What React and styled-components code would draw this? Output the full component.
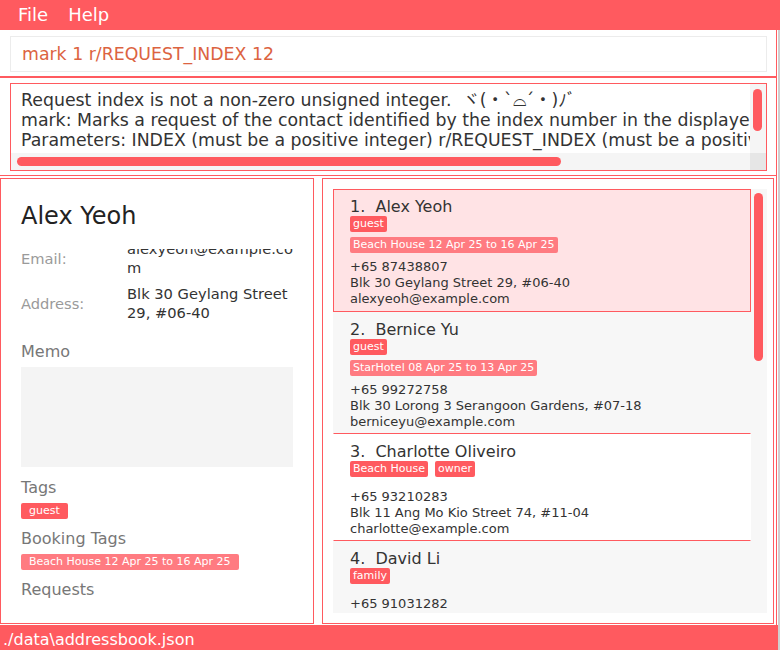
import React from "react";
import styled, { createGlobalStyle } from "styled-components";

const RED = "#ff5a5f";
const FONT = `"DejaVu Sans", "Noto Sans CJK JP", sans-serif`;

const Global = createGlobalStyle`
  html, body { margin: 0; padding: 0; }
  body { font-family: ${FONT}; background: #cfcfcf; }
  * { box-sizing: border-box; }
`;

const Window = styled.div`
  width: 780px;
  height: 650px;
  display: flex;
  flex-direction: column;
  overflow: hidden;
  background: #cfcfcf;
`;

const MenuBar = styled.div`
  height: 30px;
  flex: none;
  background: ${RED};
  display: flex;
  align-items: center;
  padding-left: 8px;
`;

const MenuItem = styled.span`
  color: #fff;
  font-size: 18px;
  padding: 0 10px;
  line-height: 30px;
`;

const Main = styled.div`
  width: 778px;
  height: 620px;
  background: #fff;
  padding-right: 1px;
  display: flex;
  flex-direction: column;
`;

const CommandPane = styled.div`
  height: 48px;
  flex: none;
  border-right: 1px solid ${RED};
  border-bottom: 2px solid ${RED};
  padding: 6px 9px 0 10px;
`;

const CommandBox = styled.div`
  height: 36px;
  border: 1px solid #ececec;
  display: flex;
  align-items: center;
  padding-left: 11px;
  font-size: 17.33px;
  color: #dc6341;
`;

const ResultPane = styled.div`
  height: 98px;
  flex: none;
  border-right: 1px solid ${RED};
  border-bottom: 1px solid ${RED};
  padding: 5px 9px 0 10px;
`;

const ResultBox = styled.div`
  height: 88px;
  border: 1px solid ${RED};
  display: grid;
  grid-template-columns: 1fr 16px;
  grid-template-rows: 1fr 17px;
`;

const ResultText = styled.div`
  overflow: hidden;
  white-space: pre;
  font-size: 17.33px;
  line-height: 20px;
  color: #333;
  padding: 6px 0 0 10px;
`;

const VTrack = styled.div`
  background: #f5f5f5;
  padding: 5px 3px 0 3px;
`;

const VThumb = styled.div`
  height: ${(p) => p.$h}px;
  width: 9px;
  border-radius: 5px;
  background: ${RED};
`;

const HTrack = styled.div`
  background: #f5f5f5;
  padding: 4px 0 0 6px;
`;

const HThumb = styled.div`
  width: ${(p) => p.$w}px;
  height: 9px;
  border-radius: 5px;
  background: ${RED};
`;

const Corner = styled.div`
  background: #e6e6e6;
`;

const Panels = styled.div`
  height: 449px;
  flex: none;
  border-right: 1px solid ${RED};
  padding: 2px 2px 1px 0;
  display: flex;
  gap: 8px;
`;

const DetailPanel = styled.div`
  width: 314px;
  flex: none;
  border: 1px solid ${RED};
  padding: 23px 20px 0 20px;
  overflow: hidden;
  display: flex;
  flex-direction: column;
`;

const DetailName = styled.div`
  font-size: 24px;
  line-height: 28px;
  color: #222;
`;

const InfoGrid = styled.div`
  display: grid;
  grid-template-columns: 106px 166px;
  grid-template-rows: 24px 38px;
  row-gap: 14px;
  margin-top: 16px;
  font-size: 14.67px;
`;

const InfoLabel = styled.div`
  color: #9a9a9a;
  display: flex;
  align-items: center;
`;

const InfoValue = styled.div`
  color: #333;
  line-height: 19px;
  display: flex;
  align-items: center;
  word-break: break-all;
  clip-path: inset(${(p) => p.$clip || 0}px -20px -40px -20px);
`;

const SectionLabel = styled.div`
  font-size: 16px;
  line-height: 20px;
  color: #777;
  margin-top: ${(p) => p.$mt}px;
`;

const MemoBox = styled.div`
  height: 100px;
  width: 272px;
  flex: none;
  background: #f4f4f4;
  margin-top: 5px;
`;

const DetailTags = styled.div`
  display: flex;
  gap: 6px;
  margin-top: 5px;
`;

const BigTag = styled.span`
  font-size: 11px;
  line-height: 16px;
  height: 16px;
  padding: 0 8px;
  color: #fff;
  border-radius: 2px;
  background: ${(p) => (p.$booking ? "#ff7b81" : RED)};
`;

const ListPanel = styled.div`
  width: 452px;
  flex: none;
  border: 1px solid ${RED};
  padding: 10px 6px 10px 10px;
  display: flex;
`;

const ListView = styled.div`
  flex: 1;
  background: #f7f7f7;
  display: flex;
  overflow: hidden;
`;

const Cards = styled.div`
  width: 418px;
  flex: none;
  display: flex;
  flex-direction: column;
`;

const Card = styled.div`
  flex: none;
  border: 1px solid transparent;
  border-bottom-color: ${RED};
  background: ${(p) => (p.$selected ? "#ffe3e5" : p.$odd ? "#ffffff" : "#f7f7f7")};
  ${(p) => (p.$selected ? `border-color: ${RED};` : "")}
  padding: 7px 16px ${(p) => (p.$selected ? 4 : 3)}px 16px;
  color: #333;
  display: flex;
  flex-direction: column;
`;

const CardName = styled.div`
  font-size: 16px;
  line-height: 19px;
  white-space: pre;
`;

const TagRow = styled.div`
  display: flex;
  gap: 7px;
  min-height: ${(p) => p.$h}px;
  margin-top: ${(p) => p.$mt || 0}px;
`;

const Tag = styled.span`
  font-size: 11px;
  line-height: 16px;
  height: 16px;
  padding: 0 3px;
  color: #fff;
  border-radius: 2px;
  background: ${(p) => (p.$booking ? "#ff7b81" : RED)};
`;

const CardLine = styled.div`
  font-size: 13px;
  line-height: 16px;
  white-space: nowrap;
`;

const CardLines = styled.div`
  margin-top: 6px;
  display: flex;
  flex-direction: column;
`;

const ListScroll = styled.div`
  width: 15px;
  flex: none;
  padding: 4px 3px 0 3px;
`;

const StatusBar = styled.div`
  height: 25px;
  flex: none;
  margin-right: -1px;
  background: ${RED};
  color: #fff;
  font-size: 16px;
  display: flex;
  align-items: center;
  padding: 3px 0 0 3px;
`;

const persons = [
  {
    name: "Alex Yeoh",
    tags: ["guest"],
    bookings: ["Beach House 12 Apr 25 to 16 Apr 25"],
    phone: "+65 87438807",
    address: "Blk 30 Geylang Street 29, #06-40",
    email: "alexyeoh@example.com",
  },
  {
    name: "Bernice Yu",
    tags: ["guest"],
    bookings: ["StarHotel 08 Apr 25 to 13 Apr 25"],
    phone: "+65 99272758",
    address: "Blk 30 Lorong 3 Serangoon Gardens, #07-18",
    email: "berniceyu@example.com",
  },
  {
    name: "Charlotte Oliveiro",
    tags: ["Beach House", "owner"],
    bookings: [],
    phone: "+65 93210283",
    address: "Blk 11 Ang Mo Kio Street 74, #11-04",
    email: "charlotte@example.com",
  },
  {
    name: "David Li",
    tags: ["family"],
    bookings: [],
    phone: "+65 91031282",
    address: "Blk 436 Serangoon Gardens Street 26, #16-43",
    email: "lidavid@example.com",
  },
];

const resultText = [
  "Request index is not a non-zero unsigned integer.  ヾ(・`⌓´・)ﾉﾞ",
  "mark: Marks a request of the contact identified by the index number in the displayed person list.",
  "Parameters: INDEX (must be a positive integer) r/REQUEST_INDEX (must be a positive integer)",
].join("\n");

export default function App() {
  return (
    <Window>
      <Global />
      <MenuBar>
        <MenuItem>File</MenuItem>
        <MenuItem>Help</MenuItem>
      </MenuBar>
      <Main>
        <CommandPane>
          <CommandBox>mark 1 r/REQUEST_INDEX 12</CommandBox>
        </CommandPane>
        <ResultPane>
          <ResultBox>
            <ResultText>{resultText}</ResultText>
            <VTrack>
              <VThumb $h={42} />
            </VTrack>
            <HTrack>
              <HThumb $w={544} />
            </HTrack>
            <Corner />
          </ResultBox>
        </ResultPane>
        <Panels>
          <DetailPanel>
            <DetailName>Alex Yeoh</DetailName>
            <InfoGrid>
              <InfoLabel>Email:</InfoLabel>
              <InfoValue $clip={3}>alexyeoh@example.com</InfoValue>
              <InfoLabel>Address:</InfoLabel>
              <InfoValue>Blk 30 Geylang Street 29, #06-40</InfoValue>
            </InfoGrid>
            <SectionLabel $mt={20}>Memo</SectionLabel>
            <MemoBox />
            <SectionLabel $mt={11}>Tags</SectionLabel>
            <DetailTags>
              <BigTag>guest</BigTag>
            </DetailTags>
            <SectionLabel $mt={10}>Booking Tags</SectionLabel>
            <DetailTags>
              <BigTag $booking>Beach House 12 Apr 25 to 16 Apr 25</BigTag>
            </DetailTags>
            <SectionLabel $mt={10}>Requests</SectionLabel>
          </DetailPanel>
          <ListPanel>
            <ListView>
              <Cards>
                {persons.map((p, i) => (
                  <Card key={p.name} $selected={i === 0} $odd={i % 2 === 0}>
                    <CardName>{`${i + 1}.  ${p.name}`}</CardName>
                    <TagRow $h={16}>
                      {p.tags.map((t) => (
                        <Tag key={t}>{t}</Tag>
                      ))}
                    </TagRow>
                    <TagRow $h={1} $mt={5}>
                      {p.bookings.map((t) => (
                        <Tag key={t} $booking>
                          {t}
                        </Tag>
                      ))}
                    </TagRow>
                    <CardLines>
                      <CardLine>{p.phone}</CardLine>
                      <CardLine>{p.address}</CardLine>
                      <CardLine>{p.email}</CardLine>
                    </CardLines>
                  </Card>
                ))}
              </Cards>
              <ListScroll>
                <VThumb $h={168} />
              </ListScroll>
            </ListView>
          </ListPanel>
        </Panels>
        <StatusBar>./data\addressbook.json</StatusBar>
      </Main>
    </Window>
  );
}
